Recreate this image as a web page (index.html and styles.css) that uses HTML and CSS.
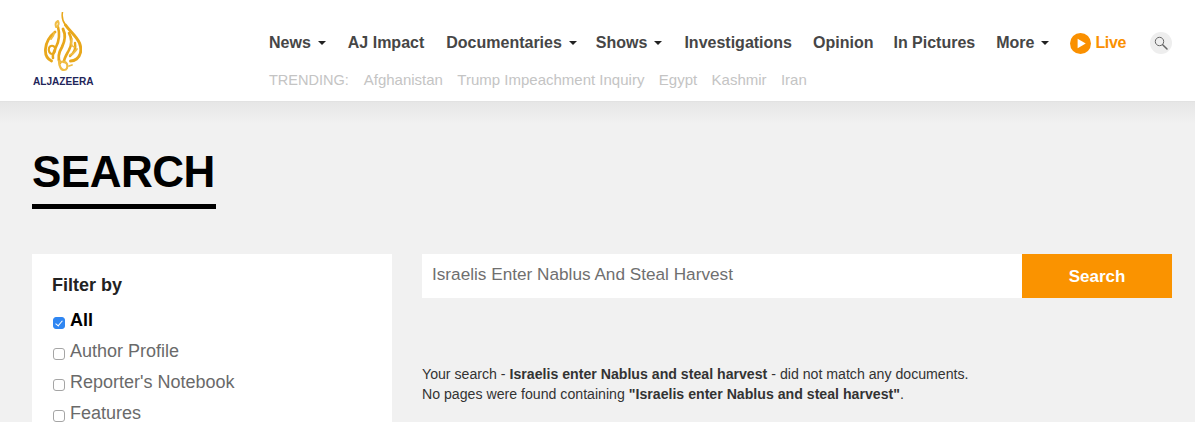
FILE: index.html
```html
<!DOCTYPE html>
<html lang="en">
<head>
<meta charset="utf-8">
<title>Search - Al Jazeera</title>
<link rel="stylesheet" href="styles.css">
</head>
<body>
<header class="site-header">
  <a class="logo" href="#">
    <svg class="logo-mark" viewBox="0 0 38 60" width="38" height="60" aria-hidden="true">
      <g fill="none" stroke-linecap="round" stroke-linejoin="round">
        <g stroke="#e8a71b">
          <path stroke-width="1.500" d="M18.500 0c-1 5 0 9 3 13"/>
          <path stroke-width="3" d="M21.500 13c4 6 11 11 14 18 2.500 7 1 13-3 16-2 1.500-4 2-6 2"/>
          <path stroke-width="2.800" d="M11 20c-5 4-9 10-9.500 17-.5 6 2 10 6 12"/>
          <path stroke-width="2.600" d="M14 15c2 7 1 14-2 20-2 4-4 8-3 11"/>
          <path stroke-width="2.800" d="M19 17c3 6 2 12-1 18-3 5-5 10-2 16"/>
          <path stroke-width="2.600" d="M25 21c3 5 3 12 0 17-2 4-5 8-5 12"/>
          <path stroke-width="2.400" d="M31 31c1 5-1 10-5 13"/>
          <path stroke-width="2.200" d="M5 36c1-3 5-3 6 0 1 3-1 6-3 6s-4-3-3-6z"/>
        </g>
        <g stroke="#f0bd45">
          <path stroke-width="2" d="M12 15c-1-3 0-5 2-6 1 2 1 4-1 6"/>
          <path stroke-width="2.200" d="M15 49c0 5 2 9 5 9 3 0 4-3 3-6-1-2-4-3-6-2"/>
          <path stroke-width="1.800" d="M28 27c-2 3-1 7 2 8M7 27c2-2 3-4 3-6M33 37c-2 3-4 5-7 6M25 54l3-1"/>
        </g>
      </g>
    </svg>
    <span class="logo-word">ALJAZEERA</span>
  </a>
  <div class="nav-area">
    <nav class="main-nav">
      <a href="#" class="nav-item has-caret nav-news">News</a>
      <a href="#" class="nav-item nav-impact">AJ Impact</a>
      <a href="#" class="nav-item has-caret nav-docs">Documentaries</a>
      <a href="#" class="nav-item has-caret nav-shows">Shows</a>
      <a href="#" class="nav-item">Investigations</a>
      <a href="#" class="nav-item nav-opinion">Opinion</a>
      <a href="#" class="nav-item">In Pictures</a>
      <a href="#" class="nav-item has-caret nav-more">More</a>
      <a href="#" class="live">
        <svg viewBox="0 0 22 22" width="21" height="21" aria-hidden="true"><circle cx="11" cy="11" r="11" fill="#fa9000"/><path d="M8 6l8.500 5L8 16z" fill="#fff"/></svg>
        Live
      </a>
      <button class="search-toggle" type="button" aria-label="Search">
        <svg viewBox="0 0 14 14" width="14" height="14" aria-hidden="true"><circle cx="5.500" cy="5.500" r="4.200" fill="none" stroke="#666" stroke-width="1"/><path d="M8.700 8.700L13 13" stroke="#666" stroke-width="1.500" stroke-linecap="round"/></svg>
      </button>
    </nav>
    <div class="trending">
      <span class="trending-label">TRENDING:</span>
      <a href="#">Afghanistan</a>
      <a href="#">Trump Impeachment Inquiry</a>
      <a href="#">Egypt</a>
      <a href="#">Kashmir</a>
      <a href="#">Iran</a>
    </div>
  </div>
</header>
<main class="page">
  <h1 class="page-title">SEARCH</h1>
  <div class="columns">
    <aside class="filter">
      <h2 class="filter-title">Filter by</h2>
      <label class="filter-option active"><input type="checkbox" checked>All</label>
      <label class="filter-option"><input type="checkbox">Author Profile</label>
      <label class="filter-option"><input type="checkbox">Reporter's Notebook</label>
      <label class="filter-option"><input type="checkbox">Features</label>
    </aside>
    <section class="results">
      <form class="search-form">
        <input class="search-input" type="text" value="Israelis Enter Nablus And Steal Harvest">
        <button class="search-button" type="button">Search</button>
      </form>
      <p class="message">Your search - <b>Israelis enter Nablus and steal harvest</b> - did not match any documents.<br>No pages were found containing <b>"Israelis enter Nablus and steal harvest"</b>.</p>
    </section>
  </div>
</main>
</body>
</html>
```
FILE: styles.css
```css
* { box-sizing: border-box; }
html, body { margin: 0; height: 422px; overflow: hidden; }
body { background: #f1f1f1; font-family: "Liberation Sans", Arial, sans-serif; color: #333; }
a { text-decoration: none; color: inherit; }

.site-header {
  height: 102px;
  background: #fff;
  border-bottom: 1px solid #e2e2e2;
  display: flex;
  padding-left: 32px;
}
.logo { width: 237px; display: flex; flex-direction: column; align-items: flex-start; padding-top: 12px; }
.logo-mark { margin-left: 12px; display: block; }
.logo-word { margin-left: 1px; margin-top: 4px; font-size: 10.100px; font-weight: 700; color: #1f2559; line-height: 12px; }

.nav-area { flex: 1; padding-top: 32px; }
.main-nav { display: flex; align-items: center; height: 22px; font-size: 16px; font-weight: 700; color: #464646; }
.nav-item { margin-right: 21px; white-space: nowrap; }
.nav-impact { margin-right: 22px; }
.nav-opinion { margin-right: 20px; }
.nav-item.has-caret { margin-right: 20px; display: flex; align-items: center; }
.nav-item.has-caret::after {
  content: "";
  margin-left: 7px;
  border-left: 4px solid transparent;
  border-right: 4px solid transparent;
  border-top: 4px solid #222;
}
.nav-item.nav-news, .nav-item.nav-shows { margin-right: 22px; }
.nav-item.nav-more { margin-right: 21px; }
.nav-item.nav-docs { margin-right: 19px; }
.live { display: flex; align-items: center; gap: 4px; color: #fa9000; letter-spacing: -0.400px; margin-right: 24px; }
.search-toggle { width: 22px; height: 22px; padding: 0; border: 0; border-radius: 50%; background: #eee; display: flex; align-items: center; justify-content: center; }

.trending { display: flex; gap: 14.400px; margin-top: 16px; font-size: 15px; line-height: 20px; color: #c4c4c4; }
.trending-label { font-size: 14.500px; margin-right: 0.600px; }

.page {
  height: 320px;
  overflow: hidden;
  padding: 45px 23px 0 32px;
  background: linear-gradient(#e6e6e6, #f1f1f1 22px);
}
.page-title {
  display: inline-block;
  margin: 0;
  font-size: 44px;
  line-height: 50px;
  font-weight: 700;
  letter-spacing: -0.500px;
  color: #000;
  padding: 0 1px 7px 0;
  border-bottom: 5px solid #000;
}
.columns { display: flex; gap: 30px; margin-top: 45px; align-items: flex-start; }
.filter { width: 360px; height: 168px; background: #fff; padding: 20px; overflow: hidden; }
.filter-title { margin: 0 0 9px; font-size: 18px; line-height: 22px; font-weight: 700; color: #222; }
.filter-option { display: flex; align-items: center; height: 31px; font-size: 18px; color: #6a6a6a; white-space: nowrap; }
.filter-option input {
  appearance: none;
  position: relative;
  margin: 5px 5px 0 1px;
  width: 12px;
  height: 12px;
  background: #fff;
  border: 1px solid #a5a5a5;
  border-radius: 3px;
}
.filter-option input:checked { background: #2f86f2; border-color: #2f86f2; }
.filter-option input:checked::after {
  content: "";
  position: absolute;
  left: 3px;
  top: 1px;
  width: 3px;
  height: 6px;
  border: solid #fff;
  border-width: 0 1.500px 1.500px 0;
  transform: rotate(40deg);
}
.filter-option.active { color: #000; font-weight: 700; }
.results { flex: 1; }
.search-form { display: flex; height: 44px; }
.search-input { flex: 1; min-width: 0; border: 0; background: #fff; padding: 0 10px 4px; font: 17.200px "Liberation Sans", Arial, sans-serif; color: #6f6f6f; }
.search-button { width: 150px; border: 0; padding: 2px 0 0; background: #fa9300; color: #fff; font: 700 17px "Liberation Sans", Arial, sans-serif; }
.message { margin: 66px 0 0; font-size: 14.150px; line-height: 20px; color: #333; }
```
